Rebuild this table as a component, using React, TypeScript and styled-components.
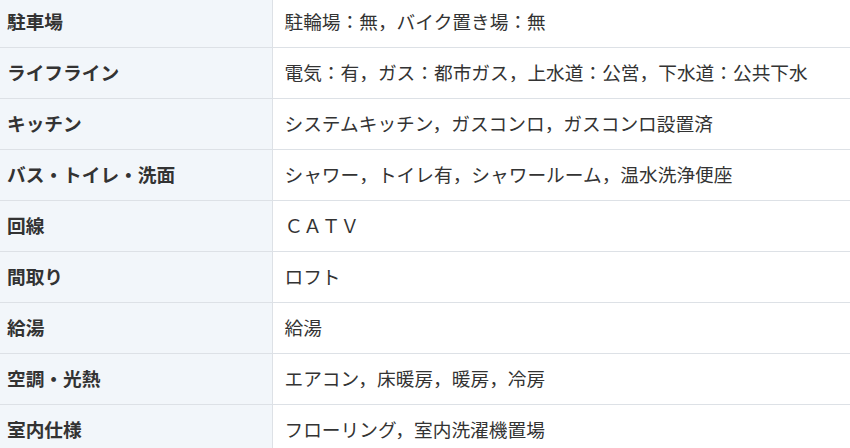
import React from "react"
import styled, { createGlobalStyle } from "styled-components"

const GlobalStyle = createGlobalStyle`
  body {
    margin: 0;
    background: #ffffff;
    font-family: "Noto Sans CJK JP", "Noto Sans", sans-serif;
    color: #333333;
    overflow: hidden;
  }
`

const Table = styled.table`
  width: 850px;
  margin-top: -4px;
  border-collapse: collapse;
  table-layout: fixed;
`

const Row = styled.tr`
  height: 51px;
  border-bottom: 1px solid #dde1e6;
`

const Label = styled.th`
  box-sizing: border-box;
  width: 272px;
  padding: 0 0 2px 7px;
  background: #f2f6fa;
  border-right: 1px solid #dde1e6;
  text-align: left;
  font-size: 18.7px;
  font-weight: 700;
  color: #333333;
  vertical-align: middle;
  white-space: nowrap;
`

const Value = styled.td`
  padding: 0 0 2px 12px;
  font-size: 18.7px;
  font-weight: 400;
  color: #333333;
  vertical-align: middle;
  white-space: nowrap;
`

const rows: [string, string][] = [
  ["駐車場", "駐輪場：無，バイク置き場：無"],
  ["ライフライン", "電気：有，ガス：都市ガス，上水道：公営，下水道：公共下水"],
  ["キッチン", "システムキッチン，ガスコンロ，ガスコンロ設置済"],
  ["バス・トイレ・洗面", "シャワー，トイレ有，シャワールーム，温水洗浄便座"],
  ["回線", "ＣＡＴＶ"],
  ["間取り", "ロフト"],
  ["給湯", "給湯"],
  ["空調・光熱", "エアコン，床暖房，暖房，冷房"],
  ["室内仕様", "フローリング，室内洗濯機置場"],
]

const App = () => {
  return (
    <>
      <GlobalStyle />
      <Table>
        <tbody>
          {rows.map(([label, value]) => (
            <Row key={label}>
              <Label>{label}</Label>
              <Value>{value}</Value>
            </Row>
          ))}
        </tbody>
      </Table>
    </>
  )
}

export default App
